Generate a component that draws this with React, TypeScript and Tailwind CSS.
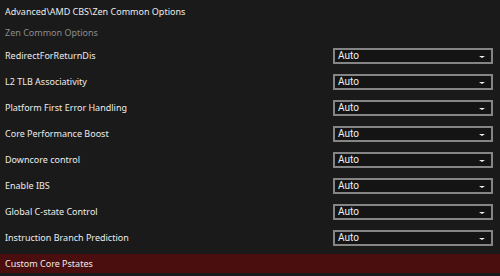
import React from 'react';

const settings = [
    'RedirectForReturnDis',
    'L2 TLB Associativity',
    'Platform First Error Handling',
    'Core Performance Boost',
    'Downcore control',
    'Enable IBS',
    'Global C-state Control',
    'Instruction Branch Prediction',
];

const Dropdown = ({ value }: { value: string }) => (
    <div className="w-[160px] h-[16px] mr-[7px] flex items-center justify-between border-2 border-[#858585] bg-[#141414] pl-[3px] pr-[6px]">
        <span className="text-[10px] leading-none text-[#f0f0f0]" style={{ fontFamily: 'Roboto, "Liberation Sans", sans-serif' }}>{value}</span>
        <span className="w-0 h-0 mt-[1px] border-l-[3px] border-r-[3px] border-t-[2px] border-l-transparent border-r-transparent border-t-[#f0f0f0]" />
    </div>
);

const App: React.FC = () => {
    return (
        <div
            className="w-[500px] h-[276px] overflow-hidden bg-[#1a1a1a] text-[9px] text-[#ececec]"
            style={{ fontFamily: '"Noto Sans", "Open Sans", sans-serif' }}
        >
            <div className="h-[23px] flex items-center pl-[5px]">Advanced\AMD CBS\Zen Common Options</div>
            <div className="h-[20px] flex items-center pl-[5px] text-[#8c8c8c]">Zen Common Options</div>

            {settings.map((name) => (
                <div key={name} className="h-[26px] flex items-center justify-between pl-[5px]">
                    <span>{name}</span>
                    <Dropdown value="Auto" />
                </div>
            ))}

            {/* Selected submenu entry */}
            <div className="h-[26px] pt-[3px]">
                <div className="h-[19px] flex items-center pl-[5px] bg-[#4a0e0e]">Custom Core Pstates</div>
            </div>
        </div>
    );
};

export default App;
